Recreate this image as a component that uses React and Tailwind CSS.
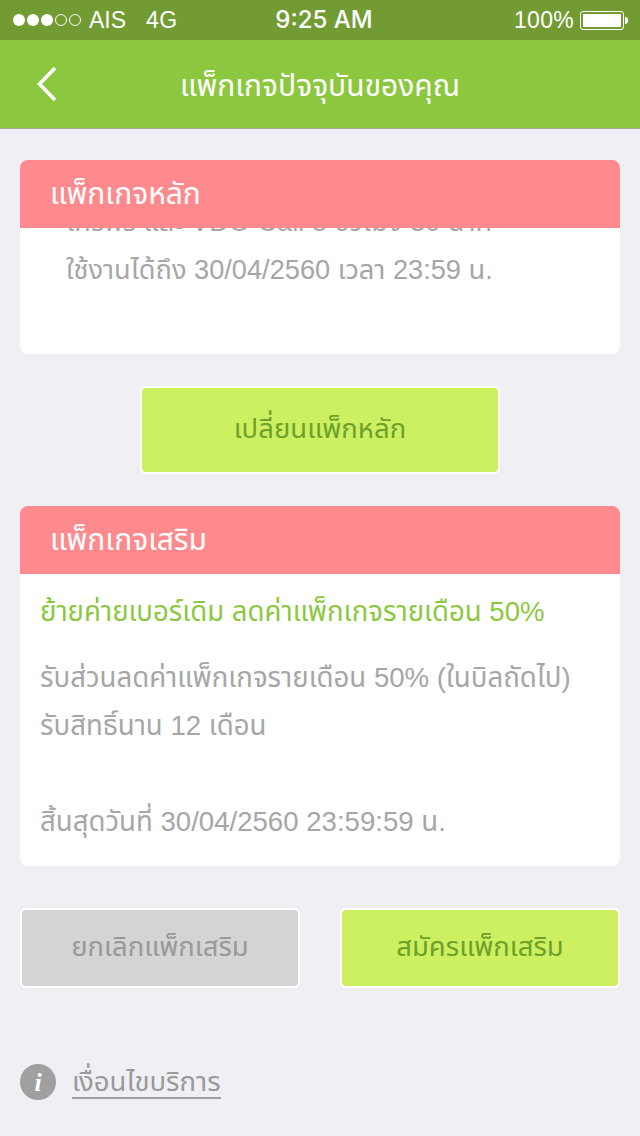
import React from 'react';

// Latin and digits come from Liberation Sans, Thai falls through to Noto
const thai = "font-['Liberation_Sans','Noto_Sans_Thai','Noto_Sans','DejaVu_Sans',sans-serif]";

function StatusBar() {
  return (
    <div className="flex h-10 items-center justify-between bg-[#729c33] pl-[13px] pr-[12px] text-white font-['Liberation_Sans',sans-serif] text-[23px]">
      <div className="flex w-[230px] items-center">
        <div className="flex gap-[2px]">
          {[1, 1, 1, 0, 0].map((filled, i) => (
            <span
              key={i}
              className={filled ? 'h-[12px] w-[12px] rounded-full bg-white' : 'h-[12px] w-[12px] rounded-full border border-white'}
            />
          ))}
        </div>
        <span className="ml-[8px]">AIS</span>
        <span className="ml-[20px] tracking-[0.5px]">4G</span>
      </div>
      <span className="ml-[7px] font-['Inter',sans-serif] text-[24px] font-medium">9:25 AM</span>
      <div className="flex w-[230px] items-center justify-end">
        <span className="tracking-[0.3px]">100%</span>
        <div className="ml-[6px] flex items-center">
          <div className="h-[19px] w-[44px] rounded-[3px] border border-white p-[2px]">
            <div className="h-full w-full rounded-[1px] bg-white" />
          </div>
          <div className="ml-px h-[7px] w-[3px] rounded-r-full bg-white" />
        </div>
      </div>
    </div>
  );
}

function NavBar() {
  return (
    <div className="relative flex h-[89px] items-center justify-center border-b border-[#a9ab9f] bg-[#8cc83f] pt-[4px]">
      <svg className="absolute left-[36px] top-[26px]" width="22" height="36" viewBox="0 0 22 36" fill="none">
        <path d="M19 2 L3.5 18 L19 34" stroke="#fff" strokeWidth="3.6" />
      </svg>
      <span className={`${thai} text-[30px] leading-none text-white`}>แพ็กเกจปัจจุบันของคุณ</span>
    </div>
  );
}

function CardHeader({ title }) {
  return (
    <div className={`${thai} relative z-10 flex h-[68px] items-center bg-[#ff8a8d] pb-[1px] pl-[30px] text-[30px] text-white`}>
      {title}
    </div>
  );
}

function Button({ label, gray, className }) {
  const colors = gray ? 'bg-[#d4d4d4] text-[#999999]' : 'bg-[#cdf061] text-[#6ea12a]';
  return (
    <div className={`${thai} ${colors} ${className} flex items-center justify-center rounded-[6px] border-2 border-white pb-[2px] text-[27.5px]`}>
      {label}
    </div>
  );
}

export default function App() {
  return (
    <div className="min-h-[1136px] bg-[#efeff4]">
      <StatusBar />
      <NavBar />

      <div className="px-5 pt-[31px]">
        {/* main package, list is scrolled so the first line sits under the header */}
        <div className="h-[194px] overflow-hidden rounded-[8px] bg-white">
          <CardHeader title="แพ็กเกจหลัก" />
          <div className={`${thai} -mt-[30px] pl-[46px] text-[27.2px] leading-[48px] text-[#a6a6a6]`}>
            <div className="relative">
              <span className="absolute -left-[20px] top-[20px] h-[5px] w-[5px] rounded-full bg-[#a6a6a6]" />
              โทรฟรี และ VDO Call 8 ชั่วโมง 30 นาที
            </div>
            <div>ใช้งานได้ถึง 30/04/2560 เวลา 23:59 น.</div>
          </div>
        </div>

        <div className="mt-8 flex justify-center">
          <Button label="เปลี่ยนแพ็กหลัก" className="h-[88px] w-[360px]" />
        </div>

        {/* add-on package */}
        <div className="mt-8 h-[360px] overflow-hidden rounded-[8px] bg-white">
          <CardHeader title="แพ็กเกจเสริม" />
          <div className={`${thai} px-5 pt-[14px] text-[27.6px] text-[#a6a6a6]`}>
            <div className="leading-[48px] text-[#8cc83f]">ย้ายค่ายเบอร์เดิม ลดค่าแพ็กเกจรายเดือน 50%</div>
            <div className="mt-[18px] leading-[48px]">รับส่วนลดค่าแพ็กเกจรายเดือน 50% (ในบิลถัดไป)</div>
            <div className="leading-[48px]">รับสิทธิ์นาน 12 เดือน</div>
            <div className="mt-[48px] leading-[48px]">สิ้นสุดวันที่ 30/04/2560 23:59:59 น.</div>
          </div>
        </div>

        <div className="mt-[42px] flex justify-between">
          <Button gray label="ยกเลิกแพ็กเสริม" className="h-[80px] w-[280px]" />
          <Button label="สมัครแพ็กเสริม" className="h-[80px] w-[280px]" />
        </div>

        <div className="mt-[76px] flex items-center">
          <div className="flex h-9 w-9 items-center justify-center rounded-full bg-[#a0a0a0] font-['Liberation_Serif',serif] text-[26px] font-bold italic text-white">
            i
          </div>
          <span className={`${thai} ml-4 h-[34px] border-b-2 border-[#a0a0a0] text-[27.5px] leading-[33px] text-[#999999]`}>
            เงื่อนไขบริการ
          </span>
        </div>
      </div>
    </div>
  );
}
